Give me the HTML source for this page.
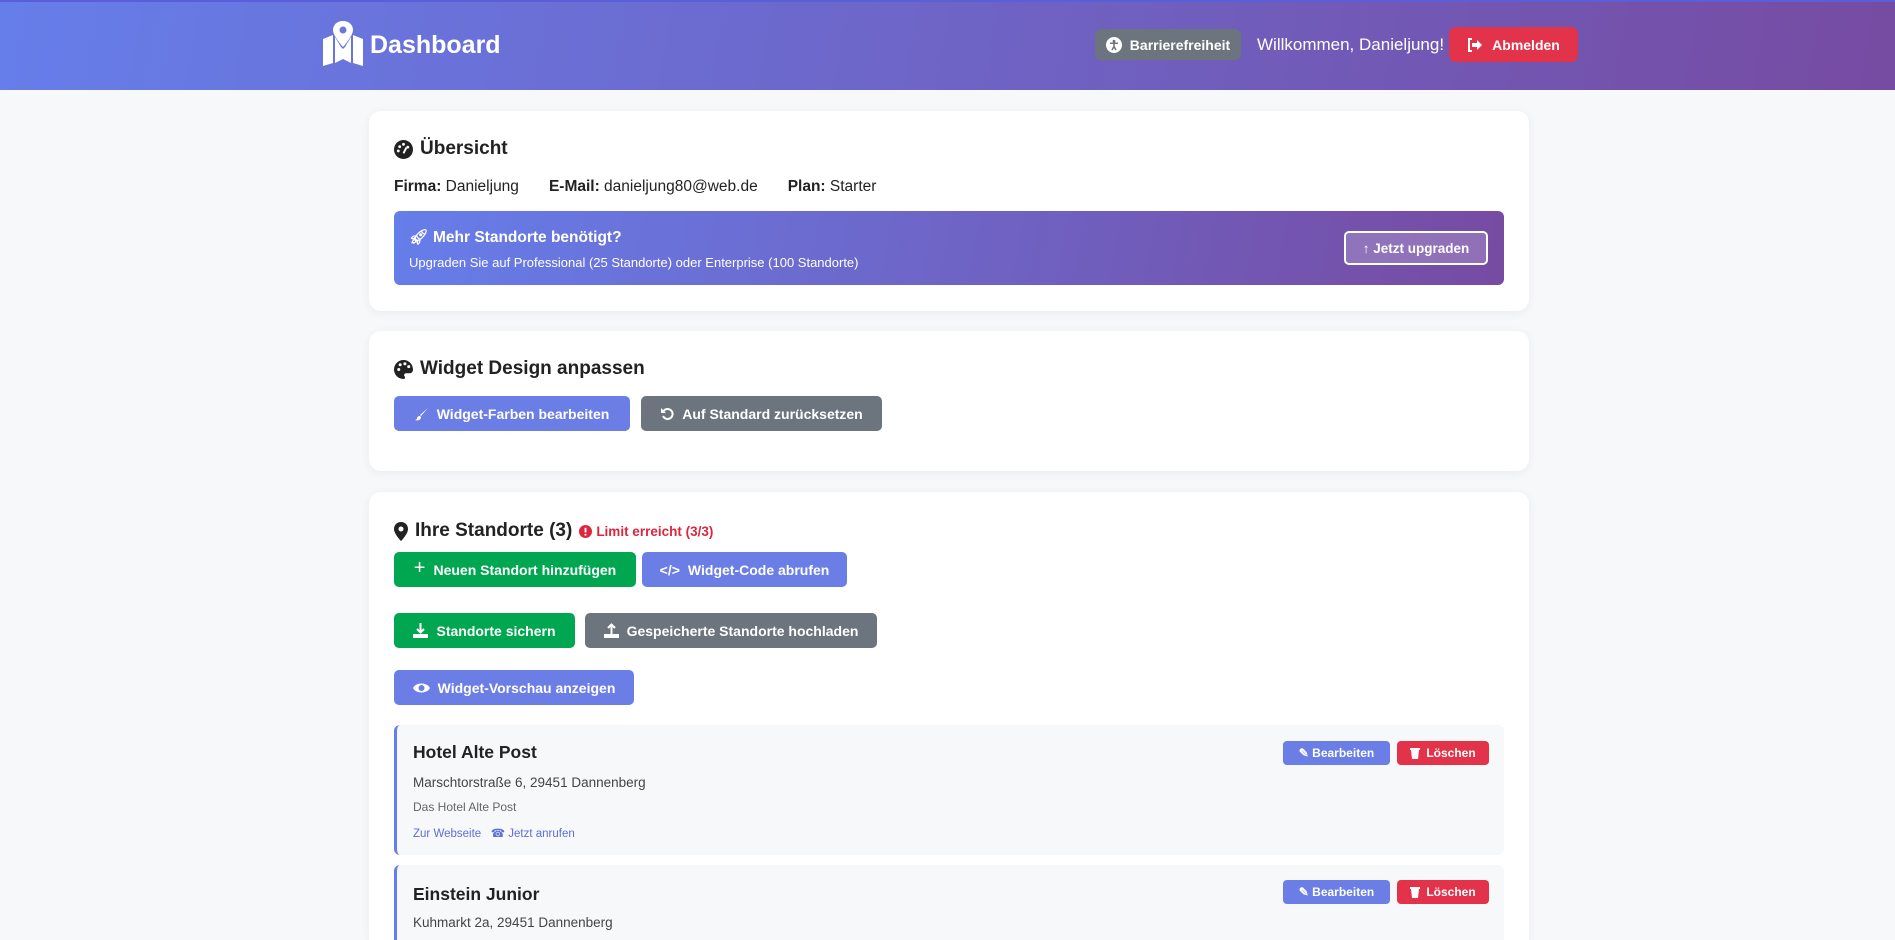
<!DOCTYPE html>
<html style="width:1895px;height:940px;overflow:hidden"><head><meta charset="utf-8"><style>
*{box-sizing:border-box;margin:0;padding:0}
body{width:1895px;height:940px;overflow:hidden;background:#f7f8fa;font-family:"Liberation Sans",Arial,sans-serif;color:#222;position:relative}
.abs{position:absolute}
.hdr{left:0;top:0;width:1895px;height:90px;background:linear-gradient(100deg,#667eea 0%,#764ba2 100%);border-top:2px solid #5a5ed8}
.card{background:#fff;border-radius:12px;box-shadow:0 2px 10px rgba(0,0,0,.06);left:369px;width:1160px}
.btn{position:absolute;display:flex;align-items:center;justify-content:center;gap:8px;color:#fff;font-weight:bold;font-size:14px;border-radius:5px;white-space:nowrap}
.blue{background:#6a7ee6}.gray{background:#6c757d}.green{background:#00a650}.red{background:#e3334a}
.h2{font-size:19px;font-weight:bold;display:flex;align-items:center;gap:7px}
.item{left:394px;width:1110px;background:#f7f8fa;border-left:3px solid #667eea;border-radius:6px}
.sbtn{font-size:12px;border-radius:4px;gap:6px}
</style></head><body>
<div class="abs hdr"></div>
<svg class="abs" style="left:323px;top:21px" width="40" height="45" viewBox="0 0 40 45"><path d="M0 18 L10 14 L10 42 L0 45Z M12 16 L18 26 L20 28 L22 26 L28 16 L28 42 L20 38 L12 42Z M30 14 L40 18 L40 45 L30 42Z" fill="#fff"/><path d="M20 0 C14 0 10 4 10 9 C10 15 20 26 20 26 C20 26 30 15 30 9 C30 4 26 0 20 0Z" fill="#fff"/><circle cx="20" cy="9" r="3.5" fill="#6b78de"/></svg>
<div class="abs" style="left:370px;top:31px;color:#fff;font-weight:bold;font-size:25px">Dashboard</div>
<div class="btn gray" style="left:1095px;top:29px;width:146px;height:31px;font-size:14px;border-radius:6px"><svg width="16" height="16" viewBox="0 0 16 16"><circle cx="8" cy="8" r="8" fill="#fff"/><circle cx="8" cy="4.2" r="1.4" fill="#6c757d"/><path d="M4 6.3h8M8 6.3v3.5M8 9.5l-2 3.5M8 9.5l2 3.5" stroke="#6c757d" stroke-width="1.5" fill="none"/></svg>Barrierefreiheit</div>
<div class="abs" style="left:1257px;top:35px;color:#fff;font-size:17px">Willkommen, Danieljung!</div>
<div class="btn red" style="left:1449px;top:27px;width:129px;height:35px;border-radius:7px;gap:10px"><svg width="15" height="14" viewBox="0 0 15 14"><path d="M5 1H2v12h3" stroke="#fff" stroke-width="2" fill="none"/><path d="M5 5h5V2l5 5-5 5V9H5z" fill="#fff"/></svg>Abmelden</div>

<div class="abs card" style="top:111px;height:200px"></div>
<div class="abs h2" style="left:394px;top:138px"><svg width="19" height="19" viewBox="0 0 20 20"><circle cx="10" cy="10" r="10" fill="#222"/><circle cx="6" cy="7" r="1.5" fill="#fff"/><circle cx="10" cy="4.5" r="1.5" fill="#fff"/><circle cx="14.5" cy="7.5" r="1.5" fill="#fff"/><circle cx="4.5" cy="11.5" r="1.5" fill="#fff"/><path d="M10 14L13 8" stroke="#fff" stroke-width="2"/></svg>Übersicht</div>
<div class="abs" style="left:394px;top:178px;font-size:15.5px"><b>Firma:</b> Danieljung<span style="display:inline-block;width:30px"></span><b>E-Mail:</b> danieljung80@web.de<span style="display:inline-block;width:30px"></span><b>Plan:</b> Starter</div>
<div class="abs" style="left:394px;top:211px;width:1110px;height:74px;border-radius:6px;background:linear-gradient(100deg,#667eea,#764ba2)"></div>
<div class="abs" style="left:409px;top:228px;color:#fff;font-weight:bold;font-size:15.5px">🚀︎ Mehr Standorte benötigt?</div>
<div class="abs" style="left:409px;top:255px;color:#fff;font-size:13px">Upgraden Sie auf Professional (25 Standorte) oder Enterprise (100 Standorte)</div>
<div class="btn" style="left:1344px;top:231px;width:144px;height:34px;border:2px solid #fff;background:rgba(255,255,255,.2);font-size:13.5px;gap:4px">↑ Jetzt upgraden</div>

<div class="abs card" style="top:331px;height:140px"></div>
<div class="abs h2" style="left:394px;top:358px"><svg width="19" height="19" viewBox="0 0 20 20"><path d="M10 0a10 10 0 100 20c2 0 2-2 1-3s0-3 2-3h3c3 0 4-2 4-4C20 4 15 0 10 0z" fill="#222"/><circle cx="5" cy="10" r="1.6" fill="#fff"/><circle cx="6.5" cy="5" r="1.6" fill="#fff"/><circle cx="11.5" cy="4" r="1.6" fill="#fff"/><circle cx="15.5" cy="7" r="1.6" fill="#fff"/></svg>Widget Design anpassen</div>
<div class="btn blue" style="left:394px;top:396px;width:236px;height:35px"><svg width="14" height="14" viewBox="0 0 14 14"><path d="M13 1L6 9l-1-1zM5 9c-2 0-3 1-3 3l-2 1c3 1 6 0 6-3z" fill="#fff"/></svg>Widget-Farben bearbeiten</div>
<div class="btn gray" style="left:641px;top:396px;width:241px;height:35px"><svg width="14" height="14" viewBox="0 0 14 14"><path d="M3 5a5 5 0 1 1 0 4" stroke="#fff" stroke-width="2" fill="none"/><path d="M1 1v5h5z" fill="#fff"/></svg>Auf Standard zurücksetzen</div>

<div class="abs card" style="top:492px;height:448px;border-radius:12px 12px 0 0"></div>
<div class="abs h2" style="left:394px;top:520px"><svg width="14" height="19" viewBox="0 0 14 19"><path d="M7 0C3 0 0 3 0 7c0 5 7 12 7 12s7-7 7-12c0-4-3-7-7-7z" fill="#222"/><circle cx="7" cy="7" r="2.5" fill="#fff"/></svg>Ihre Standorte (3) <span style="color:#dc2640;font-size:13.5px;display:flex;align-items:center;gap:4px"><svg width="13" height="13" viewBox="0 0 14 14"><circle cx="7" cy="7" r="7" fill="#dc2640"/><path d="M7 3v5" stroke="#fff" stroke-width="2"/><circle cx="7" cy="10.5" r="1.1" fill="#fff"/></svg>Limit erreicht (3/3)</span></div>
<div class="btn green" style="left:394px;top:552px;width:242px;height:35px"><span style="font-size:20px;font-weight:normal;margin-top:-3px">+</span>Neuen Standort hinzufügen</div>
<div class="btn blue" style="left:642px;top:552px;width:205px;height:35px"><span style="font-size:14px">&lt;/&gt;</span>Widget-Code abrufen</div>
<div class="btn green" style="left:394px;top:613px;width:181px;height:35px"><svg width="15" height="15" viewBox="0 0 15 15"><path d="M7.5 0v9M4 6l3.5 3.5L11 6" stroke="#fff" stroke-width="2" fill="none"/><path d="M0 11h15v4H0z" fill="#fff"/></svg>Standorte sichern</div>
<div class="btn gray" style="left:585px;top:613px;width:292px;height:35px"><svg width="15" height="15" viewBox="0 0 15 15"><path d="M7.5 11V2M4 5l3.5-3.5L11 5" stroke="#fff" stroke-width="2" fill="none"/><path d="M0 11h15v4H0z" fill="#fff"/></svg>Gespeicherte Standorte hochladen</div>
<div class="btn blue" style="left:394px;top:670px;width:240px;height:35px"><svg width="17" height="12" viewBox="0 0 17 12"><path d="M0 6C3 0 14 0 17 6C14 12 3 12 0 6z" fill="#fff"/><circle cx="8.5" cy="6" r="3" fill="#6a7ee6"/></svg>Widget-Vorschau anzeigen</div>

<div class="abs item" style="top:725px;height:130px"></div>
<div class="abs" style="left:413px;top:742px;font-size:17.5px;font-weight:bold">Hotel Alte Post</div>
<div class="abs" style="left:413px;top:775px;font-size:13.5px;color:#444">Marschtorstraße 6, 29451 Dannenberg</div>
<div class="abs" style="left:413px;top:800px;font-size:12px;color:#666">Das Hotel Alte Post</div>
<div class="abs" style="left:413px;top:826px;font-size:11.5px;color:#5b6fd8">Zur Webseite &nbsp;&nbsp;☎︎ Jetzt anrufen</div>
<div class="btn blue sbtn" style="left:1283px;top:741px;width:107px;height:24px">✎ Bearbeiten</div>
<div class="btn red sbtn" style="left:1397px;top:741px;width:92px;height:24px"><svg width="10" height="12" viewBox="0 0 10 12"><path d="M0 1h10v2H0zM1 3h8l-1 9H2z" fill="#fff"/></svg>Löschen</div>

<div class="abs item" style="top:865px;height:75px;border-radius:6px 6px 0 0"></div>
<div class="abs" style="left:413px;top:884px;font-size:17.5px;font-weight:bold">Einstein Junior</div>
<div class="abs" style="left:413px;top:915px;font-size:13.5px;color:#444">Kuhmarkt 2a, 29451 Dannenberg</div>
<div class="btn blue sbtn" style="left:1283px;top:880px;width:107px;height:24px">✎ Bearbeiten</div>
<div class="btn red sbtn" style="left:1397px;top:880px;width:92px;height:24px"><svg width="10" height="12" viewBox="0 0 10 12"><path d="M0 1h10v2H0zM1 3h8l-1 9H2z" fill="#fff"/></svg>Löschen</div>
</body></html>
